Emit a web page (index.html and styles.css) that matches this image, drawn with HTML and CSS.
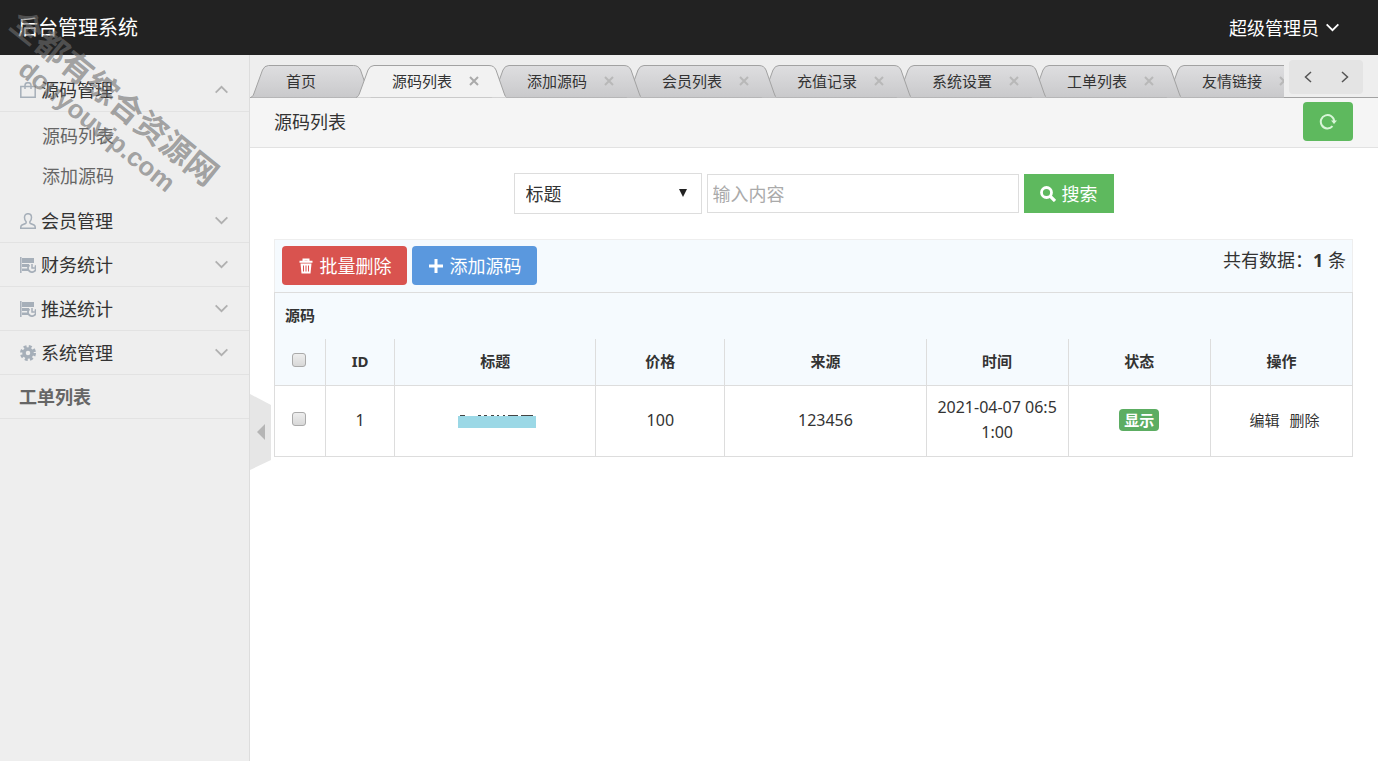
FILE: index.html
```html
<!DOCTYPE html>
<html lang="zh-CN">
<head>
<meta charset="utf-8">
<title>后台管理系统</title>
<link rel="stylesheet" href="styles.css">
</head>
<body>
<svg class="defs" aria-hidden="true">
  <defs>
    <linearGradient id="tabfill" x1="0" y1="0" x2="0" y2="1"><stop offset="0" stop-color="#dedee0"/><stop offset="1" stop-color="#c9c9cb"/></linearGradient>
    <symbol id="tab" viewBox="0 0 150 33"><path d="M0 32.500C2 32 3 30 4 27L12 5Q14 .5 18 .5H133Q138 .5 140 5L148 28Q149 32 151 32.500" stroke="#a2a2a2"/></symbol>
    <symbol id="tab-short" viewBox="0 0 120 33"><path d="M0 32.500C2 32 3 30 4 27L12 5Q14 .5 18 .5H103Q108 .5 110 5L118 28Q119 32 121 32.500" stroke="#a2a2a2"/></symbol>
    <symbol id="down" viewBox="0 0 16 10"><path d="M1.500 1.500 8 8l6.500-6.500" fill="none" stroke="currentColor" stroke-width="2"/></symbol>
    <symbol id="stats" viewBox="0 0 16 16"><path d="M.8 0V16" stroke="currentColor" stroke-width="1.500"/><path d="M2 1H14V6H2zM2 7H9V10H2zM2 11.500H8V14H2z" fill="currentColor"/><path d="M15 8.500A4 4 0 1 1 9.500 8" fill="none" stroke="currentColor" stroke-width="1.800"/><path d="M12 7V11H15" fill="none" stroke="currentColor" stroke-width="1.500"/></symbol>
  </defs>
</svg>
<header class="top">
  <h1 class="brand">后台管理系统</h1>
  <button class="user" type="button">超级管理员<svg class="chev"><use href="#down"/></svg></button>
</header>
<div class="shell">
  <nav class="side">
    <button class="group" type="button"><svg class="ico" viewBox="0 0 16 16"><path d="M.8 4.500H15.200V15.300H.8zM5 7V3.500Q5 .7 8 .7T11 3.500V7" fill="none" stroke="currentColor" stroke-width="1.500"/></svg>源码管理<svg class="chev flip"><use href="#down"/></svg></button>
    <div class="sub"><a href="#list">源码列表</a><a href="#add">添加源码</a></div>
    <button class="group" type="button"><svg class="ico" viewBox="0 0 16 16"><path d="M8 .7Q11.500.7 11.500 4.500Q11.500 7 10 8.500Q9.500 10 10.500 10.500L14 12Q15.400 12.700 15.300 15.300H.7Q.6 12.700 2 12L5.500 10.500Q6.500 10 6 8.500Q4.500 7 4.500 4.500Q4.500.7 8 .7z" fill="none" stroke="currentColor" stroke-width="1.500"/></svg>会员管理<svg class="chev"><use href="#down"/></svg></button>
    <button class="group" type="button"><svg class="ico"><use href="#stats"/></svg>财务统计<svg class="chev"><use href="#down"/></svg></button>
    <button class="group" type="button"><svg class="ico"><use href="#stats"/></svg>推送统计<svg class="chev"><use href="#down"/></svg></button>
    <button class="group" type="button"><svg class="ico" viewBox="0 0 16 16"><circle cx="8" cy="8" r="6.500" fill="none" stroke="currentColor" stroke-width="3" stroke-dasharray="2.900 2.205"/><circle cx="8" cy="8" r="4" fill="none" stroke="currentColor" stroke-width="3.500"/></svg>系统管理<svg class="chev"><use href="#down"/></svg></button>
    <a class="group plain" href="#orders">工单列表</a>
  </nav>
  <main class="main">
    <div class="tabbar">
      <div class="tabs">
        <a class="tab home" href="#t0"><svg class="shape"><use href="#tab-short"/></svg><span>首页</span></a>
        <a class="tab active" href="#t1"><svg class="shape"><use href="#tab"/></svg><span>源码列表</span><svg class="x" viewBox="0 0 10 10"><path d="M1 1 9 9M9 1 1 9"/></svg></a>
        <a class="tab z6" href="#t2"><svg class="shape"><use href="#tab"/></svg><span>添加源码</span><svg class="x" viewBox="0 0 10 10"><path d="M1 1 9 9M9 1 1 9"/></svg></a>
        <a class="tab z5" href="#t3"><svg class="shape"><use href="#tab"/></svg><span>会员列表</span><svg class="x" viewBox="0 0 10 10"><path d="M1 1 9 9M9 1 1 9"/></svg></a>
        <a class="tab z4" href="#t4"><svg class="shape"><use href="#tab"/></svg><span>充值记录</span><svg class="x" viewBox="0 0 10 10"><path d="M1 1 9 9M9 1 1 9"/></svg></a>
        <a class="tab z3" href="#t5"><svg class="shape"><use href="#tab"/></svg><span>系统设置</span><svg class="x" viewBox="0 0 10 10"><path d="M1 1 9 9M9 1 1 9"/></svg></a>
        <a class="tab z2" href="#t6"><svg class="shape"><use href="#tab"/></svg><span>工单列表</span><svg class="x" viewBox="0 0 10 10"><path d="M1 1 9 9M9 1 1 9"/></svg></a>
        <a class="tab z1" href="#t7"><svg class="shape"><use href="#tab"/></svg><span>友情链接</span><svg class="x" viewBox="0 0 10 10"><path d="M1 1 9 9M9 1 1 9"/></svg></a>
      </div>
      <div class="pager">
        <button type="button" aria-label="向左"><svg viewBox="0 0 8 12"><path d="M7 1 1.500 6 7 11"/></svg></button>
        <button type="button" aria-label="向右"><svg viewBox="0 0 8 12"><path d="M1 1 6.500 6 1 11"/></svg></button>
      </div>
    </div>
    <div class="crumb">
      <span>源码列表</span>
      <button class="refresh" type="button" aria-label="刷新"><svg viewBox="0 0 18 18"><path d="M13.500 13.200A6.700 6.700 0 1 1 15.200 8.500" fill="none" stroke="currentColor" stroke-width="2"/><path d="M12 7.500H18L15 11z" fill="currentColor"/></svg></button>
    </div>
    <div class="content">
      <form class="search">
        <div class="pick"><select aria-label="字段"><option>标题</option></select></div>
        <input type="text" placeholder="输入内容" aria-label="输入内容">
        <button type="button"><svg viewBox="0 0 16 16"><circle cx="6.500" cy="6.500" r="5" fill="none" stroke="currentColor" stroke-width="2.800"/><path d="M10 10 15 15" stroke="currentColor" stroke-width="3.200"/></svg>搜索</button>
      </form>
      <div class="tools">
        <button class="btn red" type="button"><svg viewBox="0 0 16 16"><path d="M5.500 3V1.500H10.500V3M1.500 3.800H14.500" fill="none" stroke="currentColor" stroke-width="2"/><path fill-rule="evenodd" d="M2.500 5.500H13.500L12.500 15.500H3.500zM5 7.500V13.500H6V7.500zM7.500 7.500V13.500H8.500V7.500zM10 7.500V13.500H11V7.500z" fill="currentColor"/></svg>批量删除</button>
        <button class="btn blue" type="button"><svg viewBox="0 0 16 16"><path d="M8 1V15M1 8H15" stroke="currentColor" stroke-width="3"/></svg>添加源码</button>
        <span class="count">共有数据：<strong>1</strong> 条</span>
      </div>
      <table class="grid">
        <colgroup><col class="c1"><col class="c2"><col class="c3"><col class="c4"><col class="c3"><col class="c5"><col class="c5"><col class="c5"></colgroup>
        <thead>
          <tr class="cap"><th colspan="8">源码</th></tr>
          <tr class="heads"><th class="tick"><input type="checkbox" aria-label="全选"></th><th>ID</th><th>标题</th><th>价格</th><th>来源</th><th>时间</th><th>状态</th><th>操作</th></tr>
        </thead>
        <tbody>
          <tr><td class="tick"><input type="checkbox" aria-label="选择 1"></td><td>1</td><td><svg class="mask" viewBox="0 0 78 14"><path d="M0 2H78V14H0z" fill="#9bd8e6"/><path d="M2 1.500H7M20 1.500H23M26 1.500H29M33 1.500H36M39 1.500H41M45 1.500H47M50 1.500H60M63 1.500H75" stroke="#444"/></svg></td><td>100</td><td>123456</td><td>2021-04-07 06:51:00</td><td><span class="badge">显示</span></td><td class="ops"><a href="#edit">编辑</a><a href="#del">删除</a></td></tr>
        </tbody>
      </table>
    </div>
    <button class="fold" type="button" aria-label="收起菜单"><svg viewBox="0 0 22 76"><path d="M0 0 21 11V66L0 76z" fill="#e6e6e6"/><path d="M15 30V46L7 38z" fill="#b5b5b5"/></svg></button>
  </main>
</div>
<div class="mark"><div>全都有综合资源网</div><div class="site">douyouvip.com</div></div>
</body>
</html>
```

FILE: styles.css
```css
* { box-sizing: border-box; }
body {
  margin: 0;
  min-height: 100vh;
  display: flex;
  flex-direction: column;
  position: relative;
  overflow: hidden;
  background: #fff;
  color: #333;
  font: 18px/24px "Noto Sans", "Noto Sans CJK SC", sans-serif;
}
a { color: inherit; text-decoration: none; }
button { font: inherit; color: inherit; border: 0; padding: 0; background: none; }
.defs { position: absolute; width: 0; height: 0; }

.top {
  height: 55px;
  padding: 0 38px 0 18px;
  display: flex;
  align-items: center;
  justify-content: space-between;
  background: #222;
  color: #fff;
}
.brand { margin: 0; font-size: 20px; font-weight: 400; }
.user { display: flex; align-items: center; gap: 6px; }
.chev { width: 15px; height: 9px; }

.shell { flex: 1; display: flex; }
.side {
  flex: none;
  width: 250px;
  padding-top: 13px;
  background: #eee;
  border-right: 1px solid #ddd;
}
.group {
  display: flex;
  align-items: center;
  gap: 5px;
  width: 100%;
  height: 44px;
  padding: 0 20px;
  border-bottom: 1px solid #e2e2e2;
}
.group .chev { margin-left: auto; color: #b0b0b0; }
.group .flip { transform: rotate(180deg); }
.ico { width: 16px; height: 16px; color: #a6afb9; }
.plain { padding: 0 19px; font-weight: 700; color: #666; }
.sub { padding: 4px 0 3px; display: grid; }
.sub a { height: 40px; line-height: 40px; padding-left: 42px; color: #666; }

.main { flex: 1; min-width: 0; position: relative; }
.tabbar {
  height: 43px;
  display: flex;
  background: #eee;
  border-bottom: 1px solid #a2a2a2;
}
.tabs { flex: 1; min-width: 0; height: 43px; padding-top: 10px; display: flex; overflow: hidden; }
.tab {
  flex: none;
  position: relative;
  z-index: 0;
  display: flex;
  align-items: center;
  justify-content: space-between;
  width: 150px;
  height: 33px;
  padding: 0 26px 2px 36px;
  margin-left: -15px;
  font-size: 15px;
}
.shape { position: absolute; inset: 0; z-index: -1; width: 100%; height: 33px; fill: url(#tabfill); }
.home { width: 121px; margin-left: 0; }
.active { z-index: 9; }
.active .shape { fill: #f2f2f2; }
.z6 { z-index: 6; }
.z5 { z-index: 5; }
.z4 { z-index: 4; }
.z3 { z-index: 3; }
.z2 { z-index: 2; }
.z1 { z-index: 1; }
.x { width: 10px; height: 10px; margin-right: 1px; stroke: #b8b8b8; stroke-width: 2; }
.active .x { stroke: #aaa; }
.pager {
  height: 34px;
  width: 74px;
  margin: 5px 15px 0 5px;
  display: grid;
  grid-template-columns: 1fr 1fr;
  border-radius: 4px;
  background: #e4e4e4;
}
.pager button { display: grid; place-items: center; }
.pager svg { width: 8px; height: 12px; fill: none; stroke: #555; stroke-width: 1.5; }

.crumb {
  height: 50px;
  padding: 0 25px 2px 24px;
  display: flex;
  align-items: center;
  justify-content: space-between;
  background: #f5f5f5;
  border-bottom: 1px solid #e2e2e2;
}
.refresh {
  width: 50px;
  height: 39px;
  border-radius: 4px;
  background: #5eb95e;
  color: #d8f5d8;
  display: grid;
  place-items: center;
}
.refresh svg { width: 18px; height: 18px; }

.content { padding: 25px 25px 0 24px; }
.search { display: flex; justify-content: center; align-items: center; gap: 5px; margin-bottom: 25px; }
.search input, .search select {
  font: inherit;
  color: #333;
  border: 1px solid #ddd;
  border-radius: 0;
  background: #fff;
  outline: 0;
}
.pick { position: relative; width: 188px; }
.pick select { appearance: none; width: 100%; height: 41px; padding: 0 11px; display: block; }
.pick::after {
  content: "";
  position: absolute;
  right: 15px;
  top: 16px;
  border: 4px solid transparent;
  border-top: 8px solid #222;
  border-bottom: 0;
}
.search input { width: 312px; height: 39px; padding: 0 5px; }
.search input::placeholder { color: #aaa; opacity: 1; }
.search button {
  width: 90px;
  height: 39px;
  display: flex;
  align-items: center;
  justify-content: center;
  gap: 6px;
  background: #5eb95e;
  color: #fff;
}
.search button svg { width: 16px; height: 16px; }

.tools {
  display: flex;
  gap: 5px;
  height: 53px;
  padding: 6px 6px 6px 7px;
  background: #f5fafe;
  border: 1px solid #eee;
  border-bottom: 0;
}
.btn {
  width: 125px;
  height: 39px;
  display: flex;
  align-items: center;
  justify-content: center;
  gap: 6px;
  border-radius: 4px;
  color: #fff;
}
.btn svg { width: 16px; height: 16px; }
.red { background: #d9534f; }
.blue { background: #5a98de; }
.count { margin-left: auto; line-height: 28px; }

.grid {
  width: 100%;
  table-layout: fixed;
  border-collapse: collapse;
  border: 1px solid #ddd;
  font-size: 15px;
  line-height: 25px;
  text-align: center;
}
.c1 { width: 51px; }
.c2 { width: 69px; }
.c3 { width: 201px; }
.c4 { width: 129px; }
.c5 { width: 142px; }
.grid th { padding: 0 8px; background: #f5fafe; }
.grid .cap th { height: 46px; padding: 0 10px; text-align: left; }
.heads th { height: 47px; border-bottom: 1px solid #ddd; }
.heads th + th, .grid td + td { border-left: 1px solid #ddd; }
.grid td { height: 71px; padding: 6px 8px 8px; word-break: break-all; font-size: 16px; }
.grid .tick { padding-right: 10px; }
.grid td.ops { font-size: 15px; padding-left: 14px; }
.ops a + a { margin-left: 10px; }
.mask { width: 78px; height: 14px; vertical-align: middle; margin-left: 4px; }
.grid input {
  appearance: none;
  width: 14px;
  height: 14px;
  margin: 0;
  border: 1px solid #aaa;
  border-radius: 3px;
  background: linear-gradient(#eee, #d8d8d8);
}
.badge {
  display: inline-block;
  padding: 0 5px;
  border-radius: 4px;
  background: #5cad62;
  color: #fff;
  font-size: 15px;
  font-weight: 700;
  line-height: 22px;
}
.fold { position: absolute; left: 0; top: 48%; width: 22px; height: 76px; }
.fold svg { display: block; width: 22px; height: 76px; }

.mark {
  position: absolute;
  left: 26px;
  top: 4px;
  color: rgba(110, 110, 110, .62);
  font: 700 32px/36px "Liberation Sans", "Noto Sans CJK SC", sans-serif;
  white-space: nowrap;
  transform: rotate(39deg);
  transform-origin: 0 0;
  pointer-events: none;
}
.site { font-size: 26px; line-height: 28px; padding-left: 36px; }
```
